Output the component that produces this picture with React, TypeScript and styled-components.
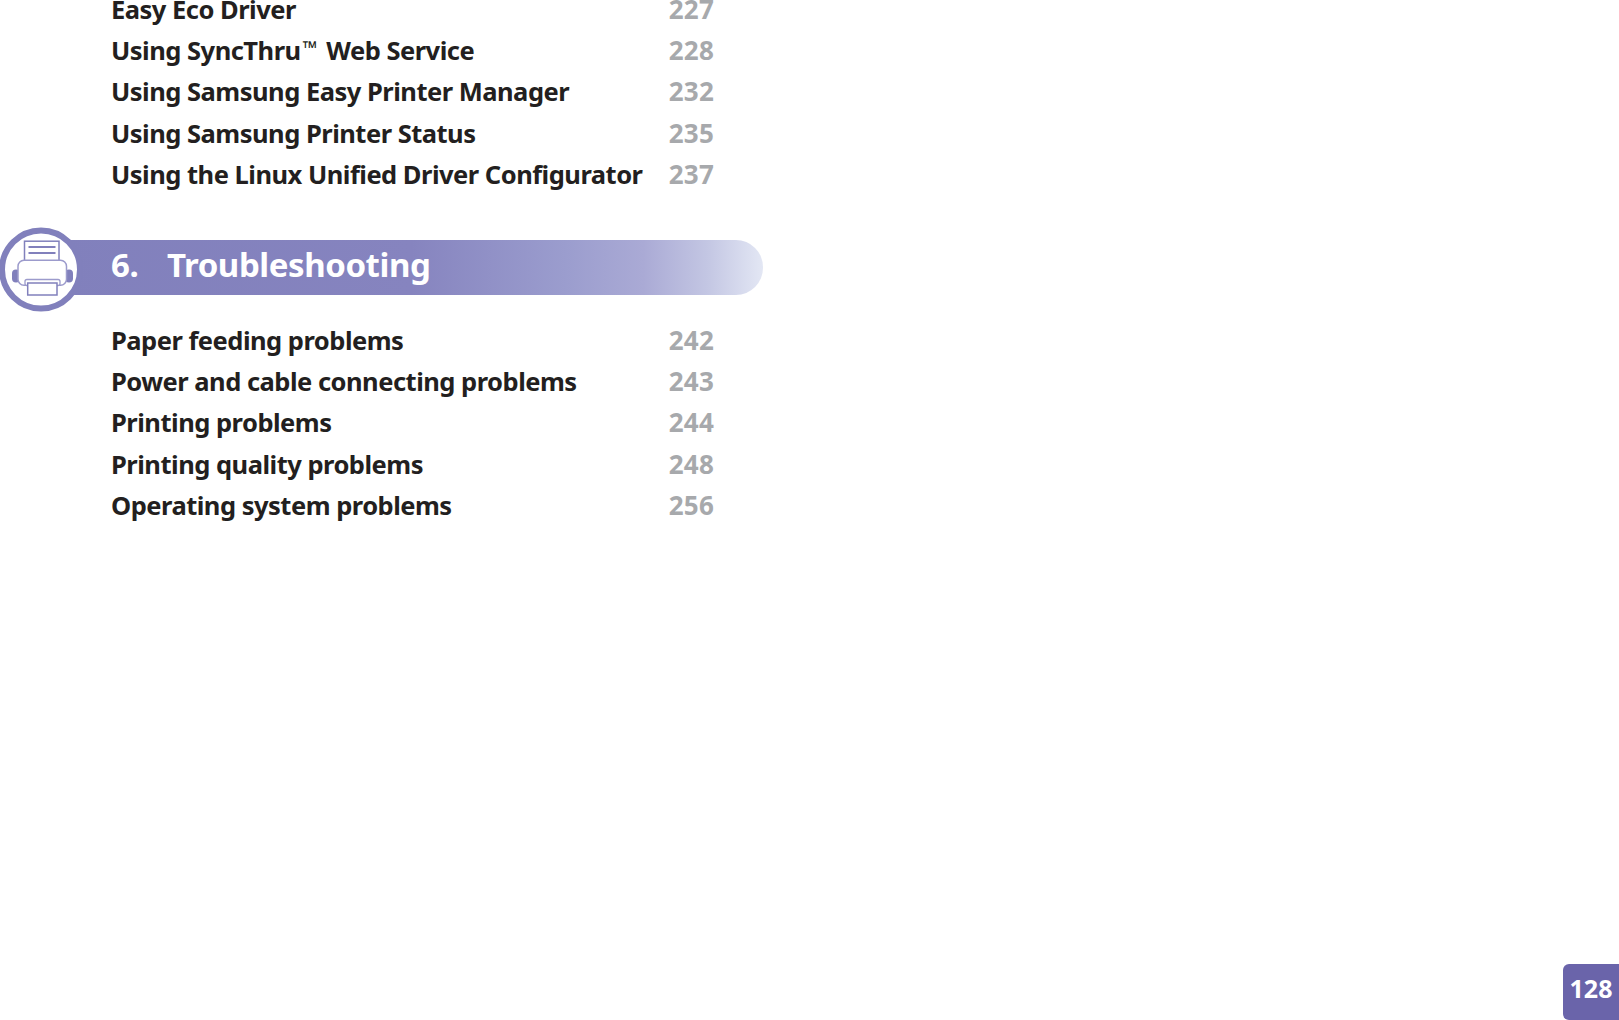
import React from "react";
import styled, { createGlobalStyle } from "styled-components";

const GlobalStyle = createGlobalStyle`
  html, body {
    margin: 0;
    padding: 0;
    background: #fff;
  }
`

const Page = styled.div`
  width: 1619px;
  height: 1020px;
  overflow: hidden;
  display: flex;
  flex-direction: column;
  font-family: "Noto Sans", "Open Sans", sans-serif;
`

const TocList = styled.div<{ $top: number }>`
  display: flex;
  flex-direction: column;
  padding-left: 111px;
  margin-top: ${(p) => p.$top}px;
`

const TocRow = styled.div`
  display: flex;
  width: 603px;
  height: 41.4px;
  align-items: center;
  justify-content: space-between;
  font-size: 25.5px;
  font-weight: 700;
  letter-spacing: -0.5px;
  white-space: nowrap;
`

const TocTitle = styled.span`
  color: #231f20;
`

const TocPage = styled.span`
  color: #a7a9ac;
  font-size: 26px;
  letter-spacing: 0.2px;
`

const Tm = styled.span`
  display: inline-block;
  margin: 0 9px 0 2px;
  font-size: 19px;
  line-height: 0;
  vertical-align: 5px;
  letter-spacing: 0;
`

const Chapter = styled.div`
  position: relative;
  margin-top: 45px;
  margin-left: 60px;
  width: 703px;
  height: 55px;
  display: flex;
  align-items: center;
  padding-left: 51px;
  padding-bottom: 6px;
  box-sizing: border-box;
  border-radius: 0 27px 27px 0;
  background: linear-gradient(90deg, #8180bc 0%, #8684bf 50%, #9b9dce 72%, #aaaad5 83%, #c3c6e3 92%, #e3e7f4 100%);
  color: #fff;
  font-size: 33px;
  font-weight: 700;
  letter-spacing: -0.42px;
`

const ChapterNum = styled.span`
  width: 56px;
`

const IconHolder = styled.div`
  position: absolute;
  left: -60px;
  top: -13px;
  width: 86px;
  height: 86px;
  line-height: 0;
`

const Footer = styled.div`
  margin-top: auto;
  display: flex;
  justify-content: flex-end;
`

const PageBadge = styled.div`
  width: 56px;
  height: 56px;
  display: flex;
  align-items: center;
  justify-content: center;
  box-sizing: border-box;
  padding-bottom: 8px;
  border-radius: 6px 0 0 6px;
  background: #6a64aa;
  color: #fff;
  font-size: 25px;
  font-weight: 700;
  letter-spacing: 0;
`

const PrinterIcon = () => (
  <svg width="86" height="86" viewBox="0 0 86 86">
    <circle cx="41" cy="42.5" r="39" fill="#fff" stroke="#8180bc" strokeWidth="6" />
    <g transform="translate(1 0.5)">
      <rect x="11" y="42" width="8" height="13" rx="4" fill="#8180bc" />
      <rect x="64" y="42" width="8" height="13" rx="4" fill="#8180bc" />
      <rect x="23.5" y="13.7" width="34.5" height="30" fill="#fff" stroke="#8180bc" strokeWidth="1.5" />
      <path d="M27.5 19.5h27M27.5 25.5h27" stroke="#8180bc" strokeWidth="1.8" fill="none" />
      <rect x="17" y="32.7" width="48.5" height="25" rx="6" fill="#fff" stroke="#9c9bcc" strokeWidth="1.5" />
      <rect x="24" y="52" width="35" height="6" rx="2" fill="#fff" stroke="#9c9bcc" strokeWidth="1.3" />
      <rect x="26.7" y="55.5" width="29.3" height="12" fill="#fff" stroke="#8180bc" strokeWidth="1.5" />
    </g>
  </svg>
)

const softwareRows: { title: React.ReactNode; page: number }[] = [
  { title: "Easy Eco Driver", page: 227 },
  { title: <>Using SyncThru<Tm>™</Tm>Web Service</>, page: 228 },
  { title: "Using Samsung Easy Printer Manager", page: 232 },
  { title: "Using Samsung Printer Status", page: 235 },
  { title: "Using the Linux Unified Driver Configurator", page: 237 },
]

const troubleRows = [
  { title: "Paper feeding problems", page: 242 },
  { title: "Power and cable connecting problems", page: 243 },
  { title: "Printing problems", page: 244 },
  { title: "Printing quality problems", page: 248 },
  { title: "Operating system problems", page: 256 },
]

const App = () => {
  return (
    <Page>
      <GlobalStyle />
      <TocList $top={-12}>
        {softwareRows.map((row) => (
          <TocRow key={row.page}>
            <TocTitle>{row.title}</TocTitle>
            <TocPage>{row.page}</TocPage>
          </TocRow>
        ))}
      </TocList>
      <Chapter>
        <IconHolder>
          <PrinterIcon />
        </IconHolder>
        <ChapterNum>6.</ChapterNum>
        Troubleshooting
      </Chapter>
      <TocList $top={24}>
        {troubleRows.map((row) => (
          <TocRow key={row.page}>
            <TocTitle>{row.title}</TocTitle>
            <TocPage>{row.page}</TocPage>
          </TocRow>
        ))}
      </TocList>
      <Footer>
        <PageBadge>128</PageBadge>
      </Footer>
    </Page>
  )
}

export default App;
